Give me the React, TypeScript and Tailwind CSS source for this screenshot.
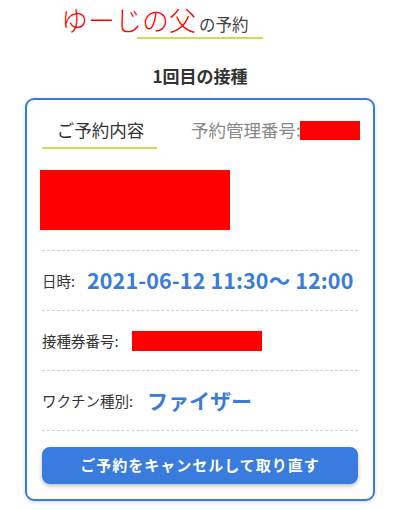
import React from "react";

const jp = { fontFamily: '"Noto Sans CJK JP", "Noto Sans", sans-serif' };

function Dashed() {
  return <div className="h-0 border-t border-dashed border-[#cfcfcf]" />;
}

export default function App() {
  return (
    <div className="w-[400px] h-[510px] bg-white text-[#333]" style={jp}>
      <div className="flex items-baseline h-[36px] pl-[61px]">
        <span className="text-[27px] leading-[39px] text-[#ff0000] font-light whitespace-nowrap">ゆーじの父</span>
        <span className="text-[16.5px] leading-[24px] text-[#444] ml-[3px] whitespace-nowrap">の予約</span>
      </div>
      <div className="mt-[1px] mx-auto w-[126px] h-[2px] bg-[#c8e04e]" />
      <div className="h-[59px] flex items-center justify-center pt-[15px]">
        <span className="text-[17px] font-bold text-[#333]">1回目の接種</span>
      </div>
      <div className="mx-[25px] h-[403px] border-2 border-[#3a7bde] rounded-[9px] shadow-[0_1px_4px_rgba(0,0,0,0.15)] px-[15px]">
        <div className="flex items-start pt-[17px]">
          <div className="w-[115px] shrink-0 flex flex-col items-center">
            <span className="text-[17.5px] leading-[26px] text-[#333] pl-[2px] whitespace-nowrap">ご予約内容</span>
            <div className="mt-[4px] w-full h-[2px] bg-[#c8e04e]" />
          </div>
          <div className="ml-[34px] shrink-0 flex items-center h-[26px]">
            <span className="text-[17.5px] leading-[26px] text-[#888] whitespace-nowrap">予約管理番号:</span>
            <div className="shrink-0 w-[60px] h-[19px] bg-[#ff0000] -ml-[1px]" />
          </div>
        </div>
        <div className="mt-[21px] w-[190px] h-[60px] bg-[#ff0000] -ml-[2px]" />
        <div className="mt-[20px]">
          <Dashed />
          <div className="h-[59px] flex items-center">
            <span className="text-[14.5px] text-[#333] whitespace-nowrap">日時:</span>
            <span className="ml-[12px] text-[21.5px] font-bold text-[#3a7bde] tracking-[0.1px] whitespace-nowrap">2021-06-12 11:30〜 12:00</span>
          </div>
          <Dashed />
          <div className="h-[59px] flex items-center">
            <span className="text-[14.5px] text-[#333] whitespace-nowrap">接種券番号:</span>
            <div className="ml-[13px] w-[130px] h-[20px] bg-[#ff0000]" />
          </div>
          <Dashed />
          <div className="h-[59px] flex items-center">
            <span className="text-[14.5px] text-[#333] whitespace-nowrap">ワクチン種別:</span>
            <span className="ml-[14px] text-[21px] font-bold text-[#3a7bde] whitespace-nowrap">ファイザー</span>
          </div>
          <Dashed />
        </div>
        <button className="mt-[16px] w-full h-[37px] rounded-[8px] bg-[#3a7bde] text-white text-[15px] font-bold tracking-[1px] shadow-[0_2px_4px_rgba(0,0,0,0.25)] flex items-center justify-center whitespace-nowrap">
          ご予約をキャンセルして取り直す
        </button>
      </div>
    </div>
  );
}
